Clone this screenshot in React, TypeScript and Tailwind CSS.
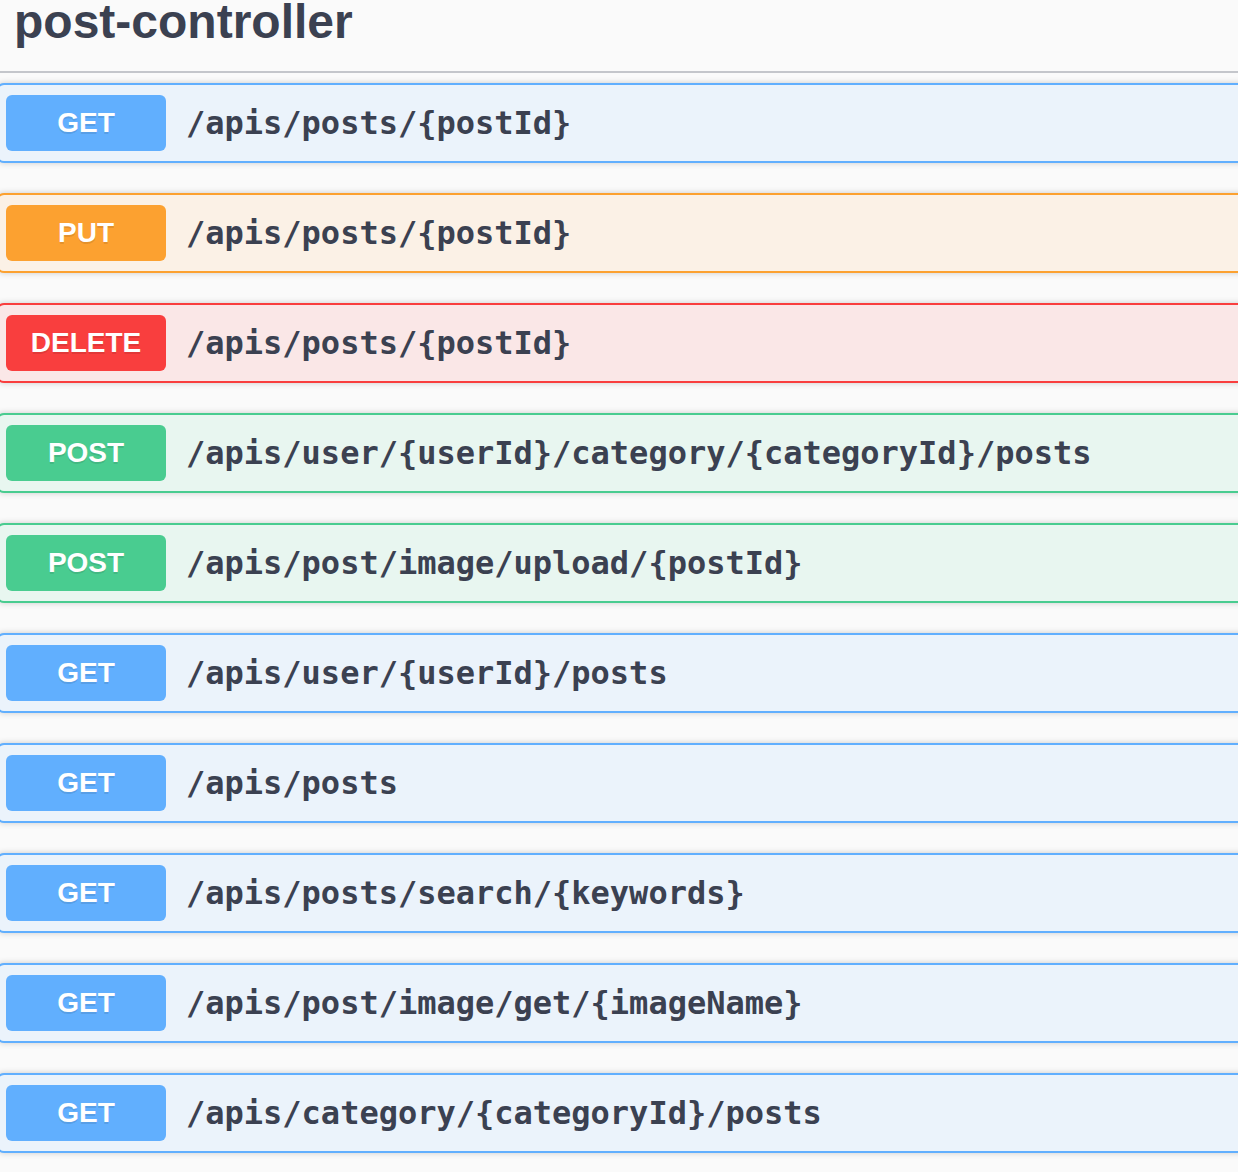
import React from 'react';

type Method = 'GET' | 'PUT' | 'DELETE' | 'POST';

const styles: Record<Method, { block: string; badge: string }> = {
    GET: { block: 'border-[#61affe] bg-[#ebf3fb]', badge: 'bg-[#61affe]' },
    PUT: { block: 'border-[#fca130] bg-[#fbf1e6]', badge: 'bg-[#fca130]' },
    DELETE: { block: 'border-[#f93e3e] bg-[#fae7e7]', badge: 'bg-[#f93e3e]' },
    POST: { block: 'border-[#49cc90] bg-[#e8f6f0]', badge: 'bg-[#49cc90]' },
};

const endpoints: { method: Method; path: string }[] = [
    { method: 'GET', path: '/apis/posts/{postId}' },
    { method: 'PUT', path: '/apis/posts/{postId}' },
    { method: 'DELETE', path: '/apis/posts/{postId}' },
    { method: 'POST', path: '/apis/user/{userId}/category/{categoryId}/posts' },
    { method: 'POST', path: '/apis/post/image/upload/{postId}' },
    { method: 'GET', path: '/apis/user/{userId}/posts' },
    { method: 'GET', path: '/apis/posts' },
    { method: 'GET', path: '/apis/posts/search/{keywords}' },
    { method: 'GET', path: '/apis/post/image/get/{imageName}' },
    { method: 'GET', path: '/apis/category/{categoryId}/posts' },
];

function Endpoint({ method, path }: { method: Method; path: string }) {
    const s = styles[method];
    return (
        <div className={`-ml-[4px] border-2 rounded-[8px] shadow-[0_0_6px_rgba(0,0,0,0.19)] ${s.block}`}>
            <div className="flex items-center py-[10px] pl-[8px]">
                {/* Method badge */}
                <span
                    className={`w-[160px] h-[56px] flex items-center justify-center rounded-[6px] text-white text-[28px] font-bold [font-family:'Liberation_Sans',Arial,sans-serif] [text-shadow:0_2px_0_rgba(0,0,0,0.1)] ${s.badge}`}
                >
                    {method}
                </span>
                {/* Path */}
                <span className="ml-[20px] text-[32px] font-bold text-[#3b4151] [font-family:'DejaVu_Sans_Mono',monospace]">
                    {path}
                </span>
            </div>
        </div>
    );
}

export default function App() {
    return (
        <div className="w-[1238px] h-[1172px] overflow-hidden bg-[#fafafa]">
            <div className="w-[1250px]">
                {/* Tag heading */}
                <div className="pt-[2px] pb-[29px] pl-[14px] border-b-2 border-[#c4c6cb]">
                    <h3 className="text-[48px] leading-[40px] font-bold text-[#3b4151] [font-family:'Liberation_Sans',Arial,sans-serif]">
                        post-controller
                    </h3>
                </div>

                {/* Operations */}
                <div className="flex flex-col gap-[30px] pt-[10px]">
                    {endpoints.map((e, i) => (
                        <Endpoint key={i} method={e.method} path={e.path} />
                    ))}
                </div>
            </div>
        </div>
    );
}
